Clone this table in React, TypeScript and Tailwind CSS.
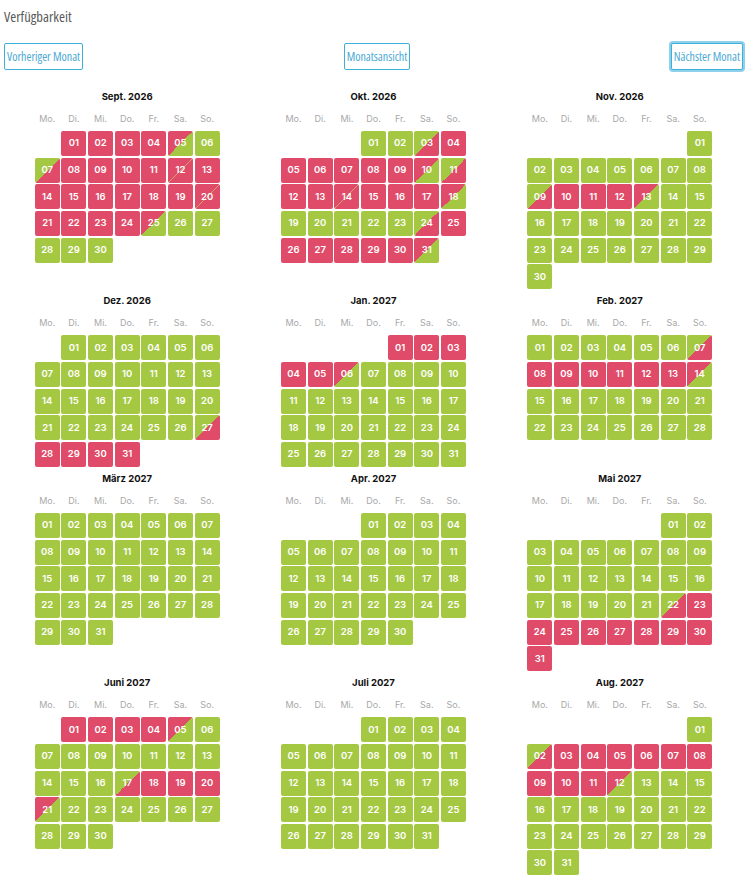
import React from "react"

const weekdays = ["Mo.", "Di.", "Mi.", "Do.", "Fr.", "Sa.", "So."]

// r = belegt, g = frei, a = Abreise (rot -> grün), b = Anreise (grün -> rot), x = Wechseltag
const months = [
  { title: "Sept. 2026", offset: 1, days: "rrrr" + "a" + "g" + "b" + "rrrr" + "x" + "rrrrrrr" + "x" + "rrrr" + "a" + "ggggg" },
  { title: "Okt. 2026", offset: 3, days: "gg" + "b" + "rrrrrr" + "a" + "b" + "rr" + "x" + "rrr" + "a" + "ggggg" + "b" + "rrrrrr" + "a" },
  { title: "Nov. 2026", offset: 6, days: "g".repeat(8) + "b" + "rrr" + "a" + "g".repeat(17) },
  { title: "Dez. 2026", offset: 1, days: "g".repeat(26) + "b" + "rrrr" },
  { title: "Jan. 2027", offset: 4, days: "rrrrr" + "a" + "g".repeat(25) },
  { title: "Feb. 2027", offset: 0, days: "g".repeat(6) + "b" + "rrrrrr" + "a" + "g".repeat(14) },
  { title: "März 2027", offset: 0, days: "g".repeat(31) },
  { title: "Apr. 2027", offset: 3, days: "g".repeat(30) },
  { title: "Mai 2027", offset: 5, days: "g".repeat(21) + "b" + "r".repeat(9) },
  { title: "Juni 2027", offset: 1, days: "rrrr" + "a" + "g".repeat(11) + "b" + "rrr" + "a" + "g".repeat(9) },
  { title: "Juli 2027", offset: 3, days: "g".repeat(31) },
  { title: "Aug. 2027", offset: 6, days: "g" + "b" + "r".repeat(9) + "a" + "g".repeat(19) },
]

const cellBg: Record<string, string> = {
  r: "bg-[#e04b6a]",
  g: "bg-[#a5c843]",
  a: "bg-[linear-gradient(to_bottom_right,#e04b6a_50%,#a5c843_50%)]",
  b: "bg-[linear-gradient(to_bottom_right,#a5c843_50%,#e04b6a_50%)]",
  x: "bg-[linear-gradient(to_bottom_right,#e04b6a_48%,#d8a06c_50%,#e04b6a_52%)]",
}

function Month({ title, offset, days }: { title: string; offset: number; days: string }) {
  return (
    <div className="flex flex-col items-center pb-[5px]">
      <div className="h-[14px] leading-[14px] text-[9.5px] font-bold text-[#111]">{title}</div>
      <div className="mt-[9px] grid grid-cols-[repeat(7,25px)] gap-x-[1.67px] h-[12px] leading-[12px]">
        {weekdays.map((w) => (
          <div key={w} className="text-center text-[9px] text-[#a8a8a8]">
            {w}
          </div>
        ))}
      </div>
      <div className="mt-[6px] grid grid-cols-[repeat(7,25px)] auto-rows-[25px] gap-[1.67px]">
        {Array.from({ length: offset }).map((_, i) => (
          <div key={"e" + i} />
        ))}
        {days.split("").map((code, i) => (
          <div
            key={i}
            className={`${cellBg[code]} rounded-[2px] flex items-center justify-center text-white text-[9.5px] font-semibold`}
          >
            {String(i + 1).padStart(2, "0")}
          </div>
        ))}
      </div>
    </div>
  )
}

export default function App() {
  return (
    <div className="w-[747px] min-h-[880px] bg-white px-[4px] font-['Inter',sans-serif]">
      <h2 className="pt-[7px] h-[26px] leading-[20px] text-[14.5px] text-[#5a5a5a] font-['Open_Sans',sans-serif] font-stretch-[75%]">
        Verfügbarkeit
      </h2>

      <div className="mt-[17px] flex items-center justify-between font-['Open_Sans',sans-serif] font-stretch-[75%]">
        <button className="h-[27px] px-[2px] border border-[#3cb0d8] rounded-[2px] text-[12px] text-[#4aa9d4] bg-white">
          Vorheriger Monat
        </button>
        <button className="h-[27px] px-[2px] border border-[#3cb0d8] rounded-[2px] text-[12px] text-[#4aa9d4] bg-white">
          Monatsansicht
        </button>
        <button className="h-[27px] px-[2px] border border-[#3cb0d8] rounded-[2px] text-[12px] text-[#4aa9d4] bg-white ring-2 ring-[#8fd0ea]">
          Nächster Monat
        </button>
      </div>

      <div className="mt-[20px] grid grid-cols-3">
        {months.map((m) => (
          <Month key={m.title} {...m} />
        ))}
      </div>
    </div>
  )
}
